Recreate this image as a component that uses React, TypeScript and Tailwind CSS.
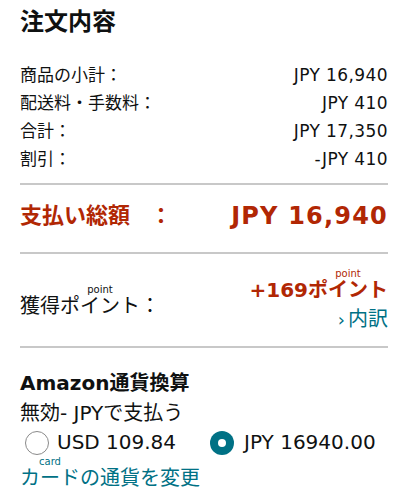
import React from "react";

const Row = ({ label, value }: { label: string; value: string }) => (
  <div className="flex h-7 items-center justify-between text-[17px] leading-7">
    <span>{label}</span>
    <span className="tracking-[0.4px]">{value}</span>
  </div>
);

const Divider = () => <div className="h-[2px] w-full bg-[#c8c8c8]" />;

export default function App() {
  return (
    <div
      lang="ja"
      className="min-h-[500px] bg-white pl-5 pr-[15px] font-['DejaVu_Sans','Noto_Sans_CJK_JP',sans-serif] text-[#0f1111]"
    >
      <h1 className="pt-[6px] text-[24px] font-bold leading-8">注文内容</h1>
      <div className="mt-[23px]">
        <Row label="商品の小計：" value="JPY 16,940" />
        <Row label="配送料・手数料：" value="JPY 410" />
        <Row label="合計：" value="JPY 17,350" />
        <Row label="割引：" value="-JPY 410" />
      </div>
      <div className="mt-[10px]">
        <Divider />
      </div>
      <div className="flex h-[67px] items-center justify-between pb-[5px] font-bold text-[#b12704]">
        <span className="text-[22px] leading-8">
          支払い総額<span className="ml-[20px]">：</span>
        </span>
        <span className="text-[24px] leading-8 tracking-[1.2px]">JPY 16,940</span>
      </div>
      <Divider />
      <div className="flex h-[92px] items-center justify-between">
        <span className="pt-[12px] text-[20px] leading-7">
          獲得
          <ruby>
            ポイント
            <rt className="text-[10px] leading-[11px]">point</rt>
          </ruby>
          ：
        </span>
        <div className="flex flex-col items-end pt-[4px]">
          <span className="text-[20px] font-bold leading-7 text-[#b12704]">
            +169
            <ruby>
              ポイント
              <rt className="text-[10px] font-normal leading-[11px]">point</rt>
            </ruby>
          </span>
          <span className="text-[20px] leading-[30px] text-[#007185]">
            <span className="mr-[3px] text-[18px]">›</span>内訳
          </span>
        </div>
      </div>
      <Divider />
      <div className="pt-[21px]">
        <div className="text-[20px] font-bold leading-[29px]">Amazon通貨換算</div>
        <div className="text-[20px] leading-[30px]">無効- JPYで支払う</div>
        <div className="flex h-[29px] items-center text-[20px] leading-[29px]">
          <span className="ml-[5px] h-6 w-6 rounded-full border-[1.5px] border-[#8a8a8a] bg-white" />
          <span className="ml-2">USD 109.84</span>
          <span className="ml-[34px] flex h-6 w-6 items-center justify-center rounded-full bg-[#007185]">
            <span className="h-2 w-2 rounded-full bg-white" />
          </span>
          <span className="ml-[10px]">JPY 16940.00</span>
        </div>
        <div className="text-[20px] leading-7 text-[#007185]">
          <ruby>
            カード
            <rt className="text-[10px] leading-[11px]">card</rt>
          </ruby>
          の通貨を変更
        </div>
      </div>
    </div>
  );
}
